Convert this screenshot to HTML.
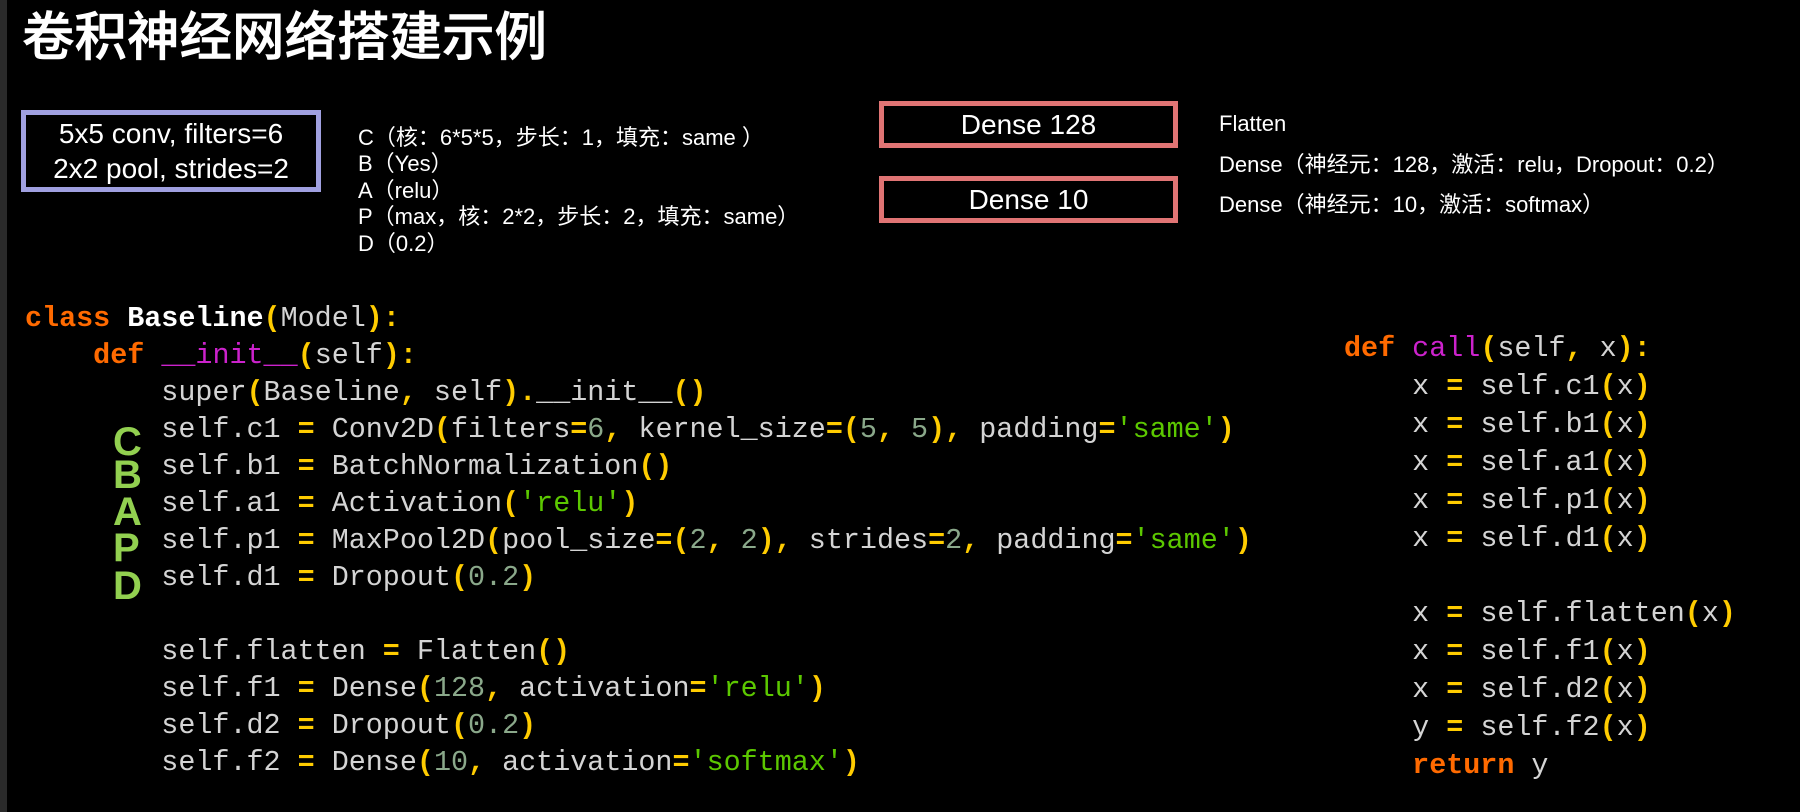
<!DOCTYPE html>
<html><head><meta charset="utf-8"><style>
body{margin:0;width:1800px;height:812px;background:#000;overflow:hidden;position:relative;font-family:"Liberation Sans","Noto Sans CJK SC",sans-serif;color:#fff}
.a{position:absolute;white-space:pre}
.bar{left:0;top:0;width:7px;height:812px;background:#2a2a2a}
.t{left:22px;top:8px;font-size:52.5px;line-height:60px;font-weight:500;-webkit-text-stroke:0.6px #fff}
.box{position:absolute;box-sizing:border-box;text-align:center;color:#fff}
.sm{font-size:22px;line-height:26.4px;color:#fff}
.c{font-family:"Liberation Mono",monospace;font-size:28.4px;line-height:37px;color:#d4d4d4}
.k{color:#ff6a00;font-weight:bold}.p{color:#ffcc00;font-weight:bold}.n{color:#8aa88a}.s{color:#5cc800}.m{color:#cc22cc}.b{color:#fff;font-weight:bold}
.g{left:113px;font-size:40px;font-weight:bold;color:#92d050;line-height:40px}
</style></head><body>
<div class="a bar"></div>
<div class="a t">卷积神经网络搭建示例</div>
<div class="box" style="left:21px;top:110px;width:300px;height:82px;border:5px solid #a0a0e0;font-size:28px;line-height:35px;padding-top:1px">5x5 conv, filters=6<br>2x2 pool, strides=2</div>
<div class="a sm" style="left:358px;top:125px">C（核：6*5*5，步长：1，填充：same ）
B（Yes）
A（relu）
P（max，核：2*2，步长：2，填充：same）
D（0.2）</div>
<div class="box" style="left:879px;top:101px;width:299px;height:47px;border:5px solid #e07474;font-size:28px;line-height:37px">Dense 128</div>
<div class="box" style="left:879px;top:176px;width:299px;height:47px;border:5px solid #e07474;font-size:28px;line-height:37px">Dense 10</div>
<div class="a sm" style="left:1219px;top:104px;line-height:40.5px">Flatten
Dense（神经元：128，激活：relu，Dropout：0.2）
Dense（神经元：10，激活：softmax）</div>
<div class="a c" style="left:25px;top:300px"><span class="k">class</span> <span class="b">Baseline</span><span class="p">(</span>Model<span class="p">):</span>
    <span class="k">def</span> <span class="m">__init__</span><span class="p">(</span>self<span class="p">):</span>
        super<span class="p">(</span>Baseline<span class="p">,</span> self<span class="p">).</span>__init__<span class="p">()</span>
        self.c1 <span class="p">=</span> Conv2D<span class="p">(</span>filters<span class="p">=</span><span class="n">6</span><span class="p">,</span> kernel_size<span class="p">=(</span><span class="n">5</span><span class="p">,</span> <span class="n">5</span><span class="p">),</span> padding<span class="p">=</span><span class="s">'same'</span><span class="p">)</span>
        self.b1 <span class="p">=</span> BatchNormalization<span class="p">()</span>
        self.a1 <span class="p">=</span> Activation<span class="p">(</span><span class="s">'relu'</span><span class="p">)</span>
        self.p1 <span class="p">=</span> MaxPool2D<span class="p">(</span>pool_size<span class="p">=(</span><span class="n">2</span><span class="p">,</span> <span class="n">2</span><span class="p">),</span> strides<span class="p">=</span><span class="n">2</span><span class="p">,</span> padding<span class="p">=</span><span class="s">'same'</span><span class="p">)</span>
        self.d1 <span class="p">=</span> Dropout<span class="p">(</span><span class="n">0.2</span><span class="p">)</span>

        self.flatten <span class="p">=</span> Flatten<span class="p">()</span>
        self.f1 <span class="p">=</span> Dense<span class="p">(</span><span class="n">128</span><span class="p">,</span> activation<span class="p">=</span><span class="s">'relu'</span><span class="p">)</span>
        self.d2 <span class="p">=</span> Dropout<span class="p">(</span><span class="n">0.2</span><span class="p">)</span>
        self.f2 <span class="p">=</span> Dense<span class="p">(</span><span class="n">10</span><span class="p">,</span> activation<span class="p">=</span><span class="s">'softmax'</span><span class="p">)</span></div>
<div class="a c" style="left:1344px;top:330px;line-height:37.9px"><span class="k">def</span> <span class="m">call</span><span class="p">(</span>self<span class="p">,</span> x<span class="p">):</span>
    x <span class="p">=</span> self.c1<span class="p">(</span>x<span class="p">)</span>
    x <span class="p">=</span> self.b1<span class="p">(</span>x<span class="p">)</span>
    x <span class="p">=</span> self.a1<span class="p">(</span>x<span class="p">)</span>
    x <span class="p">=</span> self.p1<span class="p">(</span>x<span class="p">)</span>
    x <span class="p">=</span> self.d1<span class="p">(</span>x<span class="p">)</span>

    x <span class="p">=</span> self.flatten<span class="p">(</span>x<span class="p">)</span>
    x <span class="p">=</span> self.f1<span class="p">(</span>x<span class="p">)</span>
    x <span class="p">=</span> self.d2<span class="p">(</span>x<span class="p">)</span>
    y <span class="p">=</span> self.f2<span class="p">(</span>x<span class="p">)</span>
    <span class="k">return</span> y</div>
<div class="a g" style="top:422px">C</div>
<div class="a g" style="top:455px">B</div>
<div class="a g" style="top:492px">A</div>
<div class="a g" style="top:528px">P</div>
<div class="a g" style="top:566px">D</div>
</body></html>
